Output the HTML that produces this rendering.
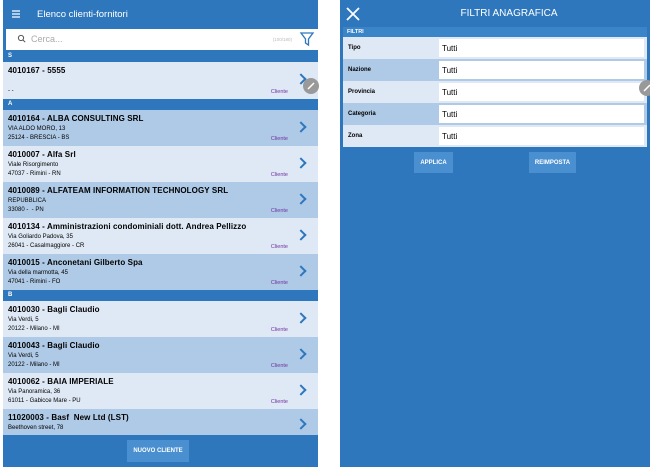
<!DOCTYPE html>
<html><head><meta charset="utf-8"><style>
*{margin:0;padding:0;box-sizing:border-box}
body{width:650px;height:470px;background:#fff;font-family:"Liberation Sans",sans-serif;position:relative;overflow:hidden}
.lp{position:absolute;left:3px;top:0;width:315px;height:467px;background:#2e77bd}
.hdr{height:28px;color:#fff;font-size:9.5px;display:flex;align-items:center}
.search{position:absolute;left:3px;top:29px;width:312px;height:21px;background:#fff}
.sec{position:absolute;left:0;width:315px;height:11px;background:#2e77bd;color:#fff;font-size:6px;font-weight:bold;padding:2px 5px}
.row{position:absolute;left:0;width:315px;height:36px;padding:4px 5px;color:#000}
.l{background:#dfe9f5}.d{background:#afcae6}
.t{font-size:8px;font-weight:bold;letter-spacing:0.1px}
.s{font-size:6px;margin-top:3px}
.c{position:absolute;right:30px;bottom:4px;font-size:5.5px;color:#7030a0}
.ch{position:absolute;right:13px;top:13px;width:8px;height:8px;border-right:2px solid #2e77bd;border-top:2px solid #2e77bd;transform:rotate(45deg)}
.btn{position:absolute;background:#4a8fd0;color:#fff;font-size:6px;font-weight:bold;display:flex;align-items:center;justify-content:center}
.rp{position:absolute;left:340px;top:0;width:310px;height:467px;background:#2e77bd}
.fr{position:absolute;left:3px;width:304px;height:22px;display:flex}
.fl{width:96px;font-size:6px;font-weight:bold;padding-left:5px;display:flex;align-items:center}
.fi{flex:1;background:#fff;margin:2px 3px 2px 0;font-size:8px;display:flex;align-items:center;padding-left:3px}
.edit{position:absolute;width:16px;height:16px;border-radius:50%;background:#999}
</style></head><body>
<div class="lp">
 <div class="hdr"><svg width="30" height="12" viewBox="0 0 30 12"><path d="M9 3h8M9 6h8M9 9h8" stroke="#fff" stroke-width="1.3"/></svg><span style="margin-left:4px">Elenco clienti-fornitori</span></div>
 <div class="search"><svg width="20" height="20" viewBox="0 0 20 20" style="position:absolute;left:8px;top:0"><circle cx="7" cy="9" r="2.6" fill="none" stroke="#555" stroke-width="1"/><path d="M9 11l2.2 2.2" stroke="#555" stroke-width="1"/></svg><span style="position:absolute;left:25px;top:5px;font-size:9px;color:#aaa">Cerca...</span><span style="position:absolute;right:26px;top:8px;font-size:4.5px;color:#bbb">(100/180)</span>
 <svg width="16" height="16" viewBox="0 0 16 16" style="position:absolute;left:293px;top:2px"><path d="M2 2h12l-4.5 6v6l-3-2v-4z" fill="none" stroke="#2e77bd" stroke-width="1.3"/></svg></div>
 <div class="sec" style="top:51px">S</div>
 <div class="row l" style="top:62px;height:37px"><div class="t">4010167 - 5555</div><div class="s" style="margin-top:13px">- -</div><div class="c">Cliente</div><div class="ch"></div></div>
 <div class="sec" style="top:99px">A</div>
 <div class="row d" style="top:110px"><div class="t">4010164 - ALBA CONSULTING SRL</div><div class="s">VIA ALDO MORO, 13</div><div class="s">25124 - BRESCIA - BS</div><div class="c">Cliente</div><div class="ch"></div></div>
 <div class="row l" style="top:146px"><div class="t">4010007 - Alfa Srl</div><div class="s">Viale Risorgimento</div><div class="s">47037 - Rimini - RN</div><div class="c">Cliente</div><div class="ch"></div></div>
 <div class="row d" style="top:182px"><div class="t">4010089 - ALFATEAM INFORMATION TECHNOLOGY SRL</div><div class="s">REPUBBLICA</div><div class="s">33080 - &nbsp;- PN</div><div class="c">Cliente</div><div class="ch"></div></div>
 <div class="row l" style="top:218px"><div class="t">4010134 - Amministrazioni condominiali dott. Andrea Pellizzo</div><div class="s">Via Goliardo Padova, 35</div><div class="s">26041 - Casalmaggiore - CR</div><div class="c">Cliente</div><div class="ch"></div></div>
 <div class="row d" style="top:254px"><div class="t">4010015 - Anconetani Gilberto Spa</div><div class="s">Via della marmotta, 45</div><div class="s">47041 - Rimini - FO</div><div class="c">Cliente</div><div class="ch"></div></div>
 <div class="sec" style="top:290px">B</div>
 <div class="row l" style="top:301px"><div class="t">4010030 - Bagli Claudio</div><div class="s">Via Verdi, 5</div><div class="s">20122 - Milano - MI</div><div class="c">Cliente</div><div class="ch"></div></div>
 <div class="row d" style="top:337px"><div class="t">4010043 - Bagli Claudio</div><div class="s">Via Verdi, 5</div><div class="s">20122 - Milano - MI</div><div class="c">Cliente</div><div class="ch"></div></div>
 <div class="row l" style="top:373px"><div class="t">4010062 - BAIA IMPERIALE</div><div class="s">Via Panoramica, 36</div><div class="s">61011 - Gabicce Mare - PU</div><div class="c">Cliente</div><div class="ch"></div></div>
 <div class="row d" style="top:409px;height:26px"><div class="t">11020003 - Basf &nbsp;New Ltd (LST)</div><div class="s">Beethoven street, 78</div><div class="ch" style="top:11px"></div></div>
 <div class="btn" style="left:124px;top:440px;width:62px;height:22px">NUOVO CLIENTE</div>
</div>
<div class="edit" style="left:303px;top:78px"><svg width="16" height="16"><path d="M5 11l6-6" stroke="#fff" stroke-width="1.5"/></svg></div>
<div class="rp">
 <svg width="16" height="16" viewBox="0 0 16 16" style="position:absolute;left:5px;top:6px"><path d="M2 2l12 12M14 2L2 14" stroke="#fff" stroke-width="1.8"/></svg>
 <div style="position:absolute;left:14px;width:310px;top:8px;text-align:center;color:#fff;font-size:10px">FILTRI ANAGRAFICA</div>
 <div style="position:absolute;left:3px;top:27px;width:304px;height:10px;background:#3a84c8;color:#fff;font-size:5.5px;font-weight:bold;padding:2px 4px">FILTRI</div>
 <div class="fr l" style="top:37px"><div class="fl">Tipo</div><div class="fi">Tutti</div></div>
 <div class="fr d" style="top:59px"><div class="fl">Nazione</div><div class="fi">Tutti</div></div>
 <div class="fr l" style="top:81px"><div class="fl">Provincia</div><div class="fi">Tutti</div></div>
 <div class="fr d" style="top:103px"><div class="fl">Categoria</div><div class="fi">Tutti</div></div>
 <div class="fr l" style="top:125px"><div class="fl">Zona</div><div class="fi">Tutti</div></div>
 <div class="btn" style="left:74px;top:152px;width:39px;height:21px">APPLICA</div>
 <div class="btn" style="left:189px;top:152px;width:47px;height:21px">REIMPOSTA</div>
</div>
<div class="edit" style="left:639px;top:80px"><svg width="16" height="16"><path d="M5 11l6-6" stroke="#fff" stroke-width="1.5"/></svg></div>
</body></html>
